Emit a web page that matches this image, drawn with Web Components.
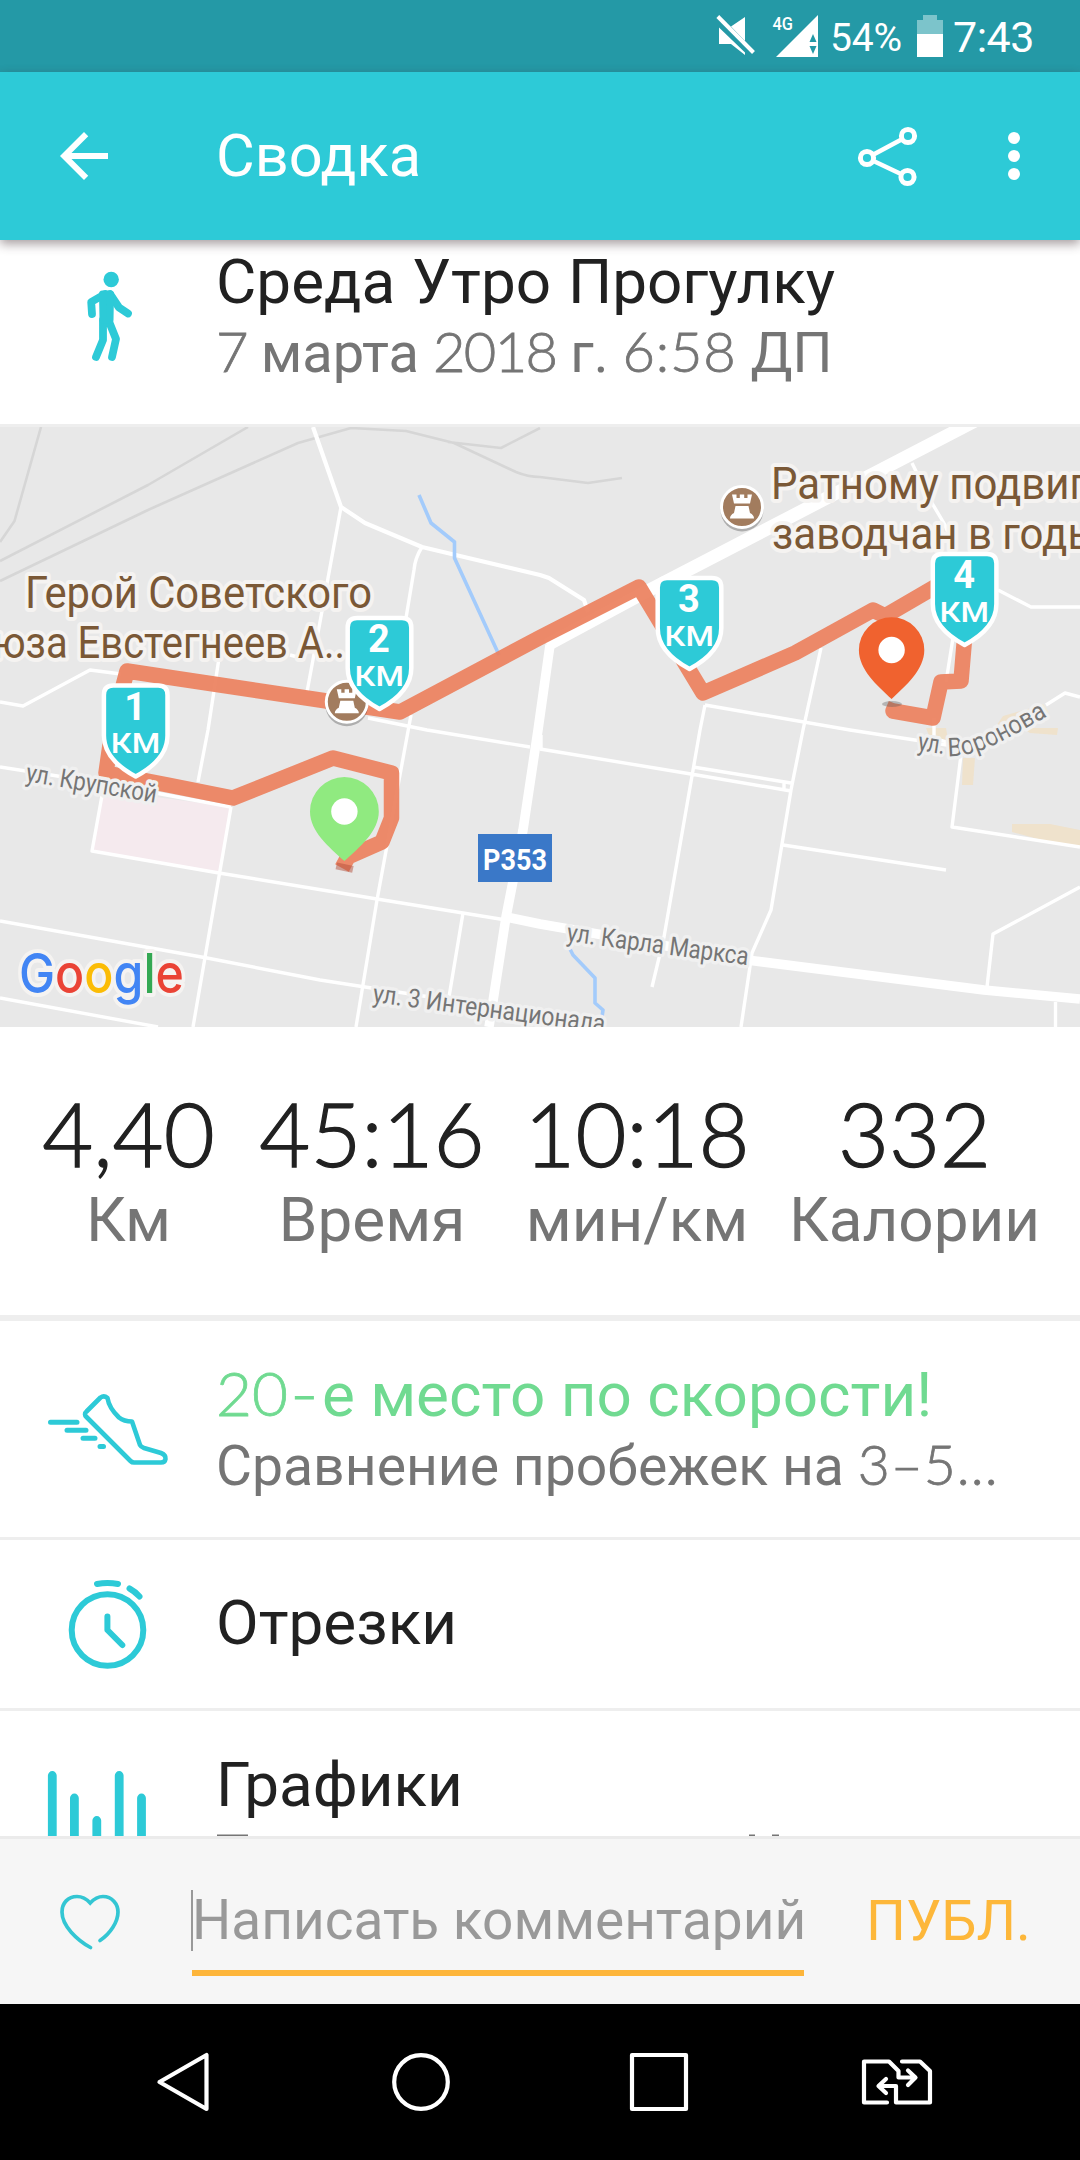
<!DOCTYPE html>
<html lang="ru">
<head>
<meta charset="utf-8">
<title>Сводка</title>
<style>
  body { margin: 0; background: #fff; font-family: Roboto, "Noto Sans", sans-serif; }
</style>
</head>
<body>
<pagina-resumen></pagina-resumen>
<script>
// Status bar
class StatusBar extends HTMLElement {
    connectedCallback() {
        this.attachShadow({ mode: 'open' }).innerHTML = `
        <style>
            :host {
                display: flex;
                justify-content: flex-end;
                height: 72px;
                box-sizing: border-box;
                padding-right: 46px;
                background: #2499a6;
                color: #fff;
            }
            svg { display: block; }
            .pct { font-size: 39px; line-height: 76px; width: 72px; letter-spacing: -0.2px; }
            .time { font-size: 43px; line-height: 74px; width: 81px; letter-spacing: -0.5px; }
        </style>
        <svg width="115" height="72" viewBox="715 0 115 72" fill="#fff">
            <path d="M719 27.5L745 52.5V55L731 44H719ZM731 26.5L745 17V41Z"/>
            <path d="M717.8 16.5L753.5 52.5" stroke="#fff" stroke-width="4"/>
            <text x="772.5" y="30" font-size="18" font-weight="500" textLength="20.5" lengthAdjust="spacingAndGlyphs">4G</text>
            <path d="M776 57H818V15Z"/>
            <path d="M809.5 42H816.5L813 34ZM809.5 46H816.5L813 54Z" fill="#2499a6"/>
        </svg>
        <div class="pct">54%</div>
        <svg width="51" height="72" viewBox="902 0 51 72">
            <path d="M917 34V20H923V15H937V20H943V34Z" fill="#7cc4cb"/>
            <path d="M917 34H943V57H917Z" fill="#fff"/>
        </svg>
        <div class="time">7:43</div>`;
    }
}
customElements.define("status-bar", StatusBar);

// Toolbar with back arrow, title and actions
class AppBar extends HTMLElement {
    connectedCallback() {
        this.attachShadow({ mode: 'open' }).innerHTML = `
        <style>
            :host {
                display: grid;
                grid-template-columns: 216px 1fr 240px;
                height: 168px;
                background: #2dcad7;
                color: #fff;
                position: relative;
                z-index: 1;
                box-shadow: 0 4px 10px rgba(60, 40, 45, 0.45);
            }
            .title { font-size: 59.5px; line-height: 168px; }
        </style>
        <svg width="216" height="168" viewBox="0 72 216 168">
            <path transform="translate(48 120) scale(3)" fill="#fff" d="M20 11H7.83l5.59-5.59L12 4l-8 8 8 8 1.41-1.41L7.83 13H20v-2z"/>
        </svg>
        <div class="title"><slot></slot></div>
        <svg width="240" height="168" viewBox="840 72 240 168" fill="none" stroke="#fff">
            <g stroke-width="5">
                <path d="M873.5 154.5L901.5 139.5M873.5 161L901 174" stroke-width="4.6"/>
                <circle cx="867" cy="158" r="6.6"/>
                <circle cx="908" cy="136" r="6.6"/>
                <circle cx="907.5" cy="177" r="6.6"/>
            </g>
            <g fill="#fff" stroke="none">
                <circle cx="1014" cy="138" r="6"/>
                <circle cx="1014" cy="156" r="6"/>
                <circle cx="1014" cy="174" r="6"/>
            </g>
        </svg>`;
    }
}
customElements.define("app-bar", AppBar);

// Row: icon on the left, title and subtitle on the right
class ListRow extends HTMLElement {
    connectedCallback() {
        this.attachShadow({ mode: 'open' }).innerHTML = `
        <style>
            :host {
                display: grid;
                grid-template-columns: 216px 1fr;
                box-sizing: border-box;
                border-bottom: 3px solid #eee;
                overflow: hidden;
                color: #212121;
                white-space: nowrap;
            }
            .text { padding-top: var(--pad, 40px); }
            .title { font-size: 62px; line-height: 68px; color: var(--title, #212121); }
            .sub { font-size: var(--sub-size, 56px); line-height: 75px; color: #757575; }
            ::slotted(svg) { display: block; }
        </style>
        <slot name="icon"></slot>
        <div class="text">
            <div class="title"><slot name="title"></slot></div>
            <div class="sub"><slot name="sub"></slot></div>
        </div>`;
    }
}
customElements.define("list-row", ListRow);

// Kilometre shield, place badge and route pin, all drawn over the streets
const kmMark = (n, x, y) => `
    <g transform="translate(${x} ${y})">
        <path d="M-22.5 -2H22.5Q31.8 -2 31.8 7.5V48C31.8 68 15 81 0 89C-15 81 -31.8 68 -31.8 48V7.5Q-31.8 -2 -22.5 -2Z" fill="#2dcad7" stroke="#fff" stroke-width="4.5"/>
        <text x="-0.5" y="32" font-size="38" font-weight="700" text-anchor="middle" fill="#fff">${n}</text>
        <text x="-25" y="65.5" font-size="27.5" font-weight="500" textLength="49.5" lengthAdjust="spacingAndGlyphs" fill="#fff">КМ</text>
    </g>`;

const tower = (x, y) => `
    <g transform="translate(${x} ${y})">
        <circle cy="3" r="21.5" fill="#000" opacity=".25"/>
        <circle r="20.5" fill="#a27c5e" stroke="#fff" stroke-width="3"/>
        <path d="M-10 -12.5H-5.5V-9H-2.2V-12.5H2.2V-9H5.5V-12.5H10L8 -3.5H-8ZM-6.5 -1H6.5L8 6Q12 8 12 11.5H-12Q-12 8 -8 6Z" fill="#fff"/>
    </g>`;

const pin = (x, y, r, h, color) => `
    <g transform="translate(${x} ${y})">
        <path d="M0 ${-r}A${r} ${r} 0 0 1 ${r} 0C${r} ${h * 0.4} ${r * 0.45} ${h * 0.72} 0 ${h}C${-r * 0.45} ${h * 0.72} ${-r} ${h * 0.4} ${-r} 0A${r} ${r} 0 0 1 0 ${-r}Z" fill="${color}"/>
        <circle r="13.2" fill="#fff"/>
    </g>`;

class RouteMap extends HTMLElement {
    connectedCallback() {
        this.attachShadow({ mode: 'open' }).innerHTML = `
        <style>
            :host { display: block; height: 600px; background: #e8e8e8; overflow: hidden; }
            svg { display: block; }
            .halo { paint-order: stroke; stroke: #f5f3f1; stroke-width: 8px; stroke-linejoin: round; }
            .place { font-size: 44px; fill: #7a5836; }
            .street { font-size: 26px; fill: #757575; stroke-width: 7px; stroke: #f0f0f0; }
        </style>
        <svg width="1080" height="600" viewBox="0 427 1080 600" fill="none" stroke-linejoin="round">
            <defs><path id="curva" d="M948 756C975 758 1005 741 1070 703"/></defs>
            <path d="M103 790L231 807L219 873L92 851Z" fill="#f5eaee"/>
            <path d="M1012 824H1050L1080 830V848L1045 841L1012 832ZM963 758H975L973 785H962ZM926 728H946L948 740L930 738ZM1003 716L1035 707L1040 712L990 735ZM1022 728L1058 728L1057 735L1030 733Z" fill="#efe2cc"/>
            <g stroke="#d6d6d6" stroke-width="2.6">
                <path d="M41 427L14.5 521L0 542M248 427L148 485L0 561M0 581L148 510L298 443L351 428L406 431L454 443L516 472Q528 477 540 477L588 483L622 478M448 442L501 448L540 428"/>
            </g>
            <g stroke="#fff" stroke-width="3.4">
                <path d="M313 427L341 507L365 523L422 547L540 575L549 578L584 600L588 612" stroke-width="4.2"/>
                <path d="M341 507L320 622L307 692M422 547Q415 558 414 570L406 618M411 715L377 900L356 1027"/>
                <path d="M0 702L23 706L90 670L121 674M219 658L208 730L198 782M290 655L305 659M368 718L427 730L530 747"/>
                <path d="M912 463L929 498L945 525L955 550M998 590L1031 607H1080M953 638L946 682M821 648L803 730L791 790L771 910L752 953L741 1027"/>
                <path d="M705 705L700 730L664 937L652 987M705 705L850 730L960 747M540 749L691 774L791 791M693 767L791 783M784 783V789"/>
                <path d="M783 845L946 870M962 747L952 827L1080 847M934 718V738L962 747M1046 705L1065 693L1080 697M1080 887L993 934L987 987M1055.5 1002V1027"/>
                <path d="M0 767L102 783L231 807M103 790L92 851L219 873L377 899L506 920M231 807L193 1027"/>
                <path d="M0 921L207 958L320 980L365 987L430 997M0 998L158 1027M463 913L449 997M541 735V749"/>
            </g>
            <path d="M975 421L638 596L547 645" stroke="#fff" stroke-width="13"/>
            <path d="M550 645L538 730L523 830L506 917L489 1027M506 917L540 924L747 960L984 990L1080 999" stroke="#fff" stroke-width="9.5"/>
            <path d="M419 495L431 523L454.5 542V558L499 655M568 945L573 955L595 978V1003L603 1010L602 1017" stroke="#a3cbfb" stroke-width="3.6"/>
            <path d="M955 752Q980 754 1046 708" stroke="#f3ead8" stroke-width="10"/>

            <g class="place halo">
                <text x="25" y="608" textLength="347" lengthAdjust="spacingAndGlyphs">Герой Советского</text>
                <text x="-7" y="658" textLength="352" lengthAdjust="spacingAndGlyphs">юза Евстегнеев А..</text>
                <text x="771" y="499" textLength="316" lengthAdjust="spacingAndGlyphs">Ратному подвиг</text>
                <text x="772" y="549" textLength="328" lengthAdjust="spacingAndGlyphs">заводчан в годы</text>
            </g>
            <path d="M342 868L348 857L382 842L391.5 818V773L333 758L233 798L168 785L106 773L113 724L127 671L400 712L540 637.5L639 587L703 693L795 653L873 610L885 616L964 570L970 600L964 645L961 681L941 682L933 718L893 711L896 704" stroke="#ec805d" stroke-width="15.5" stroke-opacity=".92"/>
            <g class="street halo">
                <text transform="translate(25 781) rotate(9.5)" textLength="132" lengthAdjust="spacingAndGlyphs">ул. Крупской</text>
                <text transform="translate(566 941) rotate(7.6)" textLength="183" lengthAdjust="spacingAndGlyphs">ул. Карла Маркса</text>
                <text transform="translate(372 1002) rotate(7.5)" textLength="234" lengthAdjust="spacingAndGlyphs">ул. 3 Интернационала</text>
                <text transform="translate(917 750) rotate(9)" textLength="27" lengthAdjust="spacingAndGlyphs">ул.</text>
                <text><textPath href="#curva" textLength="109" lengthAdjust="spacingAndGlyphs">Воронова</textPath></text>
            </g>
            <rect x="478" y="834" width="74" height="48" fill="#3a78c8"/>
            <text x="483" y="869.5" font-size="29" font-weight="700" fill="#fff" textLength="64" lengthAdjust="spacingAndGlyphs">Р353</text>

            <ellipse cx="892" cy="704" rx="10" ry="3" fill="#555" opacity=".35"/>
            <rect x="336" y="864" width="17" height="7" fill="#b4503c" opacity=".5" transform="rotate(12 344 868)"/>
            ${tower(346.8, 701.7)}
            ${tower(742, 507)}
            ${kmMark(1, 135.7, 687.5)}
            ${kmMark(2, 379.5, 620)}
            ${kmMark(3, 689.5, 580)}
            ${kmMark(4, 964.6, 556)}
            ${pin(344.4, 811.5, 34.4, 49.5, '#90ea80')}
            ${pin(891.6, 650, 32.7, 49, '#f0622f')}
            <text class="halo" x="19" y="992.5" font-family="Inter, Roboto" font-size="55" font-weight="500" textLength="165" lengthAdjust="spacingAndGlyphs"><tspan fill="#4285f4">G</tspan><tspan fill="#ea4335">o</tspan><tspan fill="#fbbc05">o</tspan><tspan fill="#4285f4">g</tspan><tspan fill="#34a853">l</tspan><tspan fill="#ea4335">e</tspan></text>
        </svg>`;
    }
}
customElements.define("route-map", RouteMap);

// One figure with its unit below
class StatItem extends HTMLElement {
    connectedCallback() {
        this.attachShadow({ mode: 'open' }).innerHTML = `
        <style>
            :host { display: block; text-align: center; white-space: nowrap; }
            .num {
                font: 300 88px/101px Lato, sans-serif;
                -webkit-text-stroke: 1.3px #212121;
                color: #212121;
            }
            .unit { font-size: 62px; line-height: 72px; color: #757575; }
        </style>
        <div class="num">${this.getAttribute('value')}</div>
        <div class="unit"><slot></slot></div>`;
    }
}
customElements.define("stat-item", StatItem);

class StatsBar extends HTMLElement {
    connectedCallback() {
        this.attachShadow({ mode: 'open' }).innerHTML = `
        <style>
            :host {
                display: grid;
                grid-template-columns: 257px 230px 300px 255px;
                box-sizing: border-box;
                height: 294px;
                padding-top: 56px;
                border-bottom: 6px solid #eee;
            }
        </style>
        <slot></slot>`;
    }
}
customElements.define("stats-bar", StatsBar);

// Comment box
class CommentBar extends HTMLElement {
    connectedCallback() {
        this.attachShadow({ mode: 'open' }).innerHTML = `
        <style>
            :host {
                display: grid;
                grid-template-columns: 192px 612px 1fr;
                box-sizing: border-box;
                height: 168px;
                border-top: 3px solid #ebebeb;
                background: #f6f6f6;
                font-size: 55px;
                white-space: nowrap;
            }
            .field {
                box-sizing: border-box;
                height: 137px;
                padding-top: 51px;
                border-bottom: 6px solid #fdb53a;
                color: #999;
            }
            .input { border-left: 2px solid #999; margin-left: -1px; height: 61px; line-height: 60px; text-indent: -1px; }
            .send { color: #fdb73a; padding: 51px 0 0 62px; line-height: 62px; font-size: 56px; }
        </style>
        <svg width="192" height="165" viewBox="0 1839 192 165">
            <path d="M90.5 1947.5C77 1940 62 1926 62 1912C62 1903 68 1896.5 77 1896.5C83 1896.5 87 1899.5 90.2 1903C93.5 1899.5 97.5 1896.5 103 1896.5C112 1896.5 118 1904 118 1912C118 1922 110 1934 100 1940.5" fill="none" stroke="#33c6d3" stroke-width="3.7" stroke-linecap="round"/>
        </svg>
        <div class="field"><div class="input">Написать комментарий</div></div>
        <div class="send">ПУБЛ.</div>`;
    }
}
customElements.define("comment-bar", CommentBar);

// System buttons
class NavBar extends HTMLElement {
    connectedCallback() {
        this.attachShadow({ mode: 'open' }).innerHTML = `
        <style>
            :host { display: block; height: 156px; background: #000; }
            svg { display: block; }
        </style>
        <svg width="1080" height="156" viewBox="0 2004 1080 156" fill="none" stroke="#fff" stroke-width="4.2" stroke-linejoin="round" stroke-linecap="round">
            <path d="M159.5 2082L206.5 2055V2109Z"/>
            <circle cx="421" cy="2082" r="26.8"/>
            <rect x="632" y="2055" width="54" height="54"/>
            <path d="M887 2102.5H864V2061.5H889L898.5 2071V2077.5H914M908 2070.5L915.5 2077.5L908 2085M902 2061.5H920L930 2071V2102.5H896V2086H880M886 2079L878.5 2086L886 2093"/>
        </svg>`;
    }
}
customElements.define("nav-bar", NavBar);

// Whole page
class PaginaResumen extends HTMLElement {
    connectedCallback() {
        this.attachShadow({ mode: 'open' }).innerHTML = `
        <style>
            :host { display: flex; flex-direction: column; width: 1080px; height: 2160px; overflow: hidden; }
            .activity { height: 187px; --pad: 8px; }
            .activity [slot=title] { word-spacing: 1.5px; }
            .speed { height: 219px; --title: #70da91; --sub-size: 55.3px; }
            .laps { height: 171px; --pad: 49px; }
            .charts { height: 125px; border: 0; }
            /* thin digits */
            .d { font-family: Lato, sans-serif; font-weight: 300; line-height: 0; -webkit-text-stroke: 0.8px currentColor; }
            .date { letter-spacing: -1.6px; }
            .hour { letter-spacing: 0.8px; }
            .dash { display: inline-block; transform: scaleX(1.25); padding: 0 6px 0 5px; }
            .range { letter-spacing: 1px; }
        </style>
        <status-bar></status-bar>
        <app-bar>Сводка</app-bar>
        <list-row class="activity">
            <svg slot="icon" width="216" height="184" viewBox="0 240 216 184" fill="none" stroke="#2dcad7" stroke-width="7.8" stroke-linecap="round" stroke-linejoin="round">
                <circle cx="111.2" cy="279.5" r="7.7" fill="#2dcad7" stroke="none"/>
                <path d="M92 314L91.2 302L105 294M110 294L119 307.5L128 313.5M103 320V340L96 357M108 319L116 339L112 357"/>
                <path d="M102.5 294H110.5L110 320H103Z" fill="#2dcad7" stroke-width="7"/>
            </svg>
            <span slot="title">Среда Утро Прогулку</span>
            <span slot="sub"><span class="d date">7</span> марта <span class="d date">2018</span> г. <span class="d hour">6:58</span> ДП</span>
        </list-row>
        <route-map></route-map>
        <stats-bar>
            <stat-item value="4,40">Км</stat-item>
            <stat-item value="45:16">Время</stat-item>
            <stat-item value="10:18">мин/км</stat-item>
            <stat-item value="332">Калории</stat-item>
        </stats-bar>
        <list-row class="speed">
            <svg slot="icon" width="216" height="216" viewBox="0 1321 216 216" fill="none" stroke="#2dcad7" stroke-width="4.6" stroke-linecap="round" stroke-linejoin="round">
                <path d="M50.5 1422.3H77M67 1430.3H86M83 1438.3H95M100 1446.5H103.5" stroke-width="5"/>
                <path d="M100.5 1397.5Q104 1395 107.5 1398Q109 1408 119 1417.5Q124 1421.5 132 1421.5L140 1445Q141 1447 144 1448L161 1453Q166 1455 165.5 1459Q165 1462.5 161 1462.5H134Q132 1462.5 130.5 1461L86.5 1417Q83.5 1414 86.5 1411.5Z"/>
            </svg>
            <span slot="title"><span class="d">20<span class="dash">-</span></span>е место по скорости!</span>
            <span slot="sub">Сравнение пробежек на <span class="d range">3–5...</span></span>
        </list-row>
        <list-row class="laps">
            <svg slot="icon" width="216" height="168" viewBox="0 1540 216 168" fill="none" stroke="#2dcad7" stroke-width="6" stroke-linecap="round" stroke-linejoin="round">
                <circle cx="107.5" cy="1630" r="35.8"/>
                <path d="M97 1584Q107.5 1582 118 1584M129.5 1588.5Q135 1591.5 139.5 1596.5M107.4 1616.5V1630L122.3 1645"/>
            </svg>
            <span slot="title">Отрезки</span>
        </list-row>
        <list-row class="charts">
            <svg slot="icon" width="216" height="125" viewBox="0 1711 216 125" fill="none" stroke="#2dcad7" stroke-width="8.8" stroke-linecap="round">
                <path d="M52.3 1775.5V1850M74.4 1798V1850M96.8 1820.5V1850M119.2 1775.5V1850M141.5 1798V1850"/>
            </svg>
            <span slot="title">Графики</span>
            <svg slot="sub" width="600" height="17" viewBox="216 1819 600 17" fill="#757575">
                <path d="M217 1834.5H248V1836H217ZM749 1834.5H755V1836H749ZM772 1834.5H779V1836H772Z"/>
            </svg>
        </list-row>
        <comment-bar></comment-bar>
        <nav-bar></nav-bar>`;
    }
}
customElements.define("pagina-resumen", PaginaResumen);
</script>
</body>
</html>
